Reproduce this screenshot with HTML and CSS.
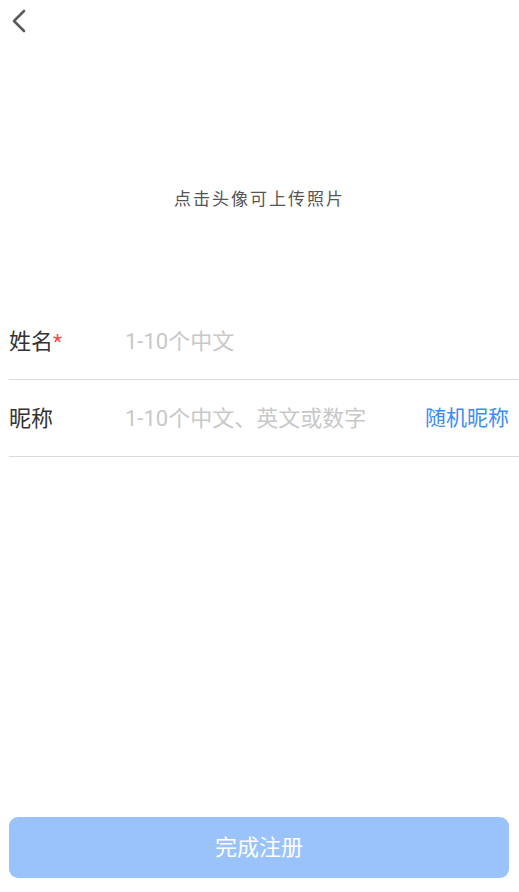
FILE: index.html
```html
<!DOCTYPE html>
<html lang="zh">
<head>
<meta charset="utf-8">
<link rel="stylesheet" href="styles.css">
</head>
<body>
<div class="page">
  <header class="nav">
    <svg class="back" width="20" height="26" viewBox="0 0 20 26"><path d="M15 3 L5 13 L15 23" fill="none" stroke="#5a5a5a" stroke-width="2.6" stroke-linecap="round" stroke-linejoin="round"/></svg>
  </header>
  <section class="avatar">
    <p class="tip">点击头像可上传照片</p>
  </section>
  <section class="form">
    <div class="row">
      <span class="label">姓名<em>*</em></span>
      <span class="placeholder">1-10个中文</span>
    </div>
    <div class="row">
      <span class="label">昵称</span>
      <span class="placeholder">1-10个中文、英文或数字</span>
      <span class="action">随机昵称</span>
    </div>
  </section>
  <div class="spacer"></div>
  <div class="footer">
    <button class="submit">完成注册</button>
  </div>
</div>
</body>
</html>
```
FILE: styles.css
```css
* { box-sizing: border-box; }
html, body { margin: 0; padding: 0; background: #fff; }
body { font-family: Roboto, "Noto Sans CJK SC", sans-serif; }
.page { width: 519px; height: 892px; display: flex; flex-direction: column; }
.nav { height: 44px; display: flex; align-items: center; padding-left: 9px; }
.back { display: block; margin-top: -2px; }
.avatar { height: 259px; display: flex; flex-direction: column; align-items: center; padding-top: 143px; }
.tip { margin: 0; font-size: 17px; line-height: 24px; color: #555; letter-spacing: 2px; }
.form { padding-left: 9px; }
.row { height: 77px; display: flex; align-items: center; border-bottom: 1px solid #dcdcdc; padding-bottom: 4px; padding-right: 10px; }
.label { width: 116px; font-size: 22px; color: #333; }
.label em { font-style: normal; color: #f04848; font-size: 21px; }
.placeholder { flex: 1; font-size: 22px; color: #c8c8c8; }
.action { font-size: 21px; color: #3b8cf3; }
.spacer { flex: 1; }
.footer { padding: 0 10px 14px 9px; }
.submit { width: 100%; height: 61px; border: none; border-radius: 9px; background: #9ac3fb; color: #fff; font-size: 22px; font-family: inherit; display: block; padding: 0 0 6px; }
```
